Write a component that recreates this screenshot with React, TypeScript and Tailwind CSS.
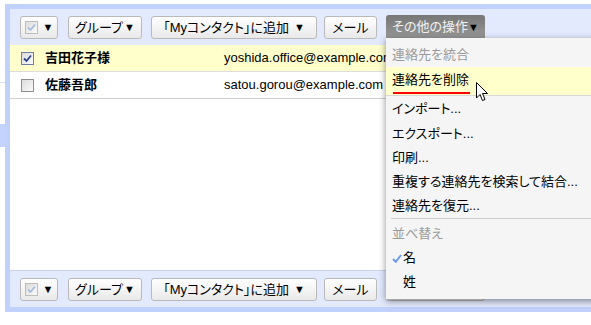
import React from "react"

const font = "font-['Liberation_Sans','Noto_Sans_CJK_JP',sans-serif]"

function Check({ color = "#2b3f8f" }: { color?: string }) {
  return (
    <svg width="9" height="9" viewBox="0 0 9 9" className="block">
      <path d="M1 4.5 L3.5 7 L8 1.5" fill="none" stroke={color} strokeWidth="1.8" />
    </svg>
  )
}

function Checkbox({ checked, disabled }: { checked?: boolean; disabled?: boolean }) {
  const border = disabled ? "border-[#bdbdbd]" : checked ? "border-[#6f7fa8]" : "border-[#8f8f8f]"
  return (
    <div
      className={`w-[13px] h-[13px] border ${border} bg-gradient-to-br from-[#dcdcdc] to-[#fbfbfb] flex items-center justify-center shrink-0`}
    >
      {checked && <Check color={disabled ? "#a9bde0" : "#2b3f8f"} />}
    </div>
  )
}

function Btn({ w, children, className = "" }: { w: string; children?: React.ReactNode; className?: string }) {
  return (
    <div
      className={`${w} h-[23px] shrink-0 border border-[#b9b9b9] rounded-[3px] bg-gradient-to-b from-[#ffffff] to-[#e9e9e9] flex items-center justify-center text-[13px] text-black ${className}`}
    >
      {children}
    </div>
  )
}

function Toolbar({ dark }: { dark?: boolean }) {
  return (
    <div className="flex items-start pl-[10px]">
      <Btn w="w-[38px]" className="gap-[5px]">
        <Checkbox checked disabled />
        <span className="text-[11px]">▼</span>
      </Btn>
      <Btn w="w-[74px]" className="ml-[10px]">
        グループ<span className="text-[11px] ml-[1px]">▼</span>
      </Btn>
      <Btn w="w-[166px]" className="ml-[9px]">
        「Myコンタクト」に追加<span className="text-[11px] ml-[5px]">▼</span>
      </Btn>
      <Btn w="w-[53px]" className="ml-[7px]">
        メール
      </Btn>
      {dark ? (
        <div className="ml-[9px] w-[99px] h-[24px] -mt-[1px] rounded-t-[3px] bg-gradient-to-b from-[#767676] to-[#999999] flex items-center justify-center text-[13px] text-[#f2f2f2]">
          その他の操作<span className="text-[11px] text-black">▼</span>
        </div>
      ) : (
        // hidden under the open menu
        <Btn w="w-[99px]" className="ml-[9px]" />
      )}
    </div>
  )
}

const rows = [
  { name: "吉田花子様", email: "yoshida.office@example.com", checked: true },
  { name: "佐藤吾郎", email: "satou.gorou@example.com", checked: false },
]

function MenuItem({ children, gray, h = "h-[24px]" }: { children: React.ReactNode; gray?: boolean; h?: string }) {
  return (
    <div className={`${h} flex items-center pl-[6px] whitespace-nowrap ${gray ? "text-[#9a9a9a]" : "text-black"}`}>
      {children}
    </div>
  )
}

export default function App() {
  return (
    <div className={`relative w-[591px] h-[325px] bg-white overflow-hidden ${font} [font-feature-settings:'palt']`}>
      <div className="absolute left-0 top-[124px] w-[5px] h-[23px] bg-[#c3d3fd]" />
      <div className="absolute left-0 top-[82px] w-[5px] h-[1px] bg-[#dde4f5]" />

      <div className="ml-[5px] mt-[4px] w-[700px] border-l-[5px] border-t-[5px] border-b-[5px] border-[#c0d1fc] flex flex-col">
        {/* top toolbar */}
        <div className="h-[36px] bg-[#e3eafe] pt-[7px]">
          <Toolbar dark />
        </div>

        {/* contact list */}
        <div className="h-[226px] bg-white border-b border-[#c9d3ec]">
          {rows.map((r) => (
            <div
              key={r.name}
              className={`h-[27px] flex items-center pl-[11px] border-b ${r.checked ? "bg-[#ffffcc] border-[#dddddd]" : "bg-white border-[#cfcfcf]"}`}
            >
              <Checkbox checked={r.checked} />
              <div className="ml-[11px] w-[179px] text-[13px] font-bold text-black">{r.name}</div>
              <div className="text-[13px] text-black">{r.email}</div>
            </div>
          ))}
        </div>

        {/* bottom toolbar */}
        <div className="h-[36px] bg-[#e3eafe] pt-[7px]">
          <Toolbar />
        </div>
      </div>

      {/* open menu */}
      <div className="absolute left-[386px] top-[38px] w-[230px] h-[261px] bg-[#f5f5f5] shadow-[0_2px_7px_rgba(0,0,0,0.45)] pt-[5px] text-[13px]">
        <MenuItem gray>連絡先を統合</MenuItem>
        <div className="h-[29px] bg-[#ffffcc] border-b border-[#d8d8d8] pl-[6px] flex flex-col">
          <div className="h-[25px] flex items-center whitespace-nowrap">連絡先を削除</div>
          <div className="ml-[1px] w-[77px] h-[2px] bg-[#ff0000]" />
        </div>
        <MenuItem h="h-[25px]">インポート...</MenuItem>
        <MenuItem h="h-[25px]">エクスポート...</MenuItem>
        <MenuItem>印刷...</MenuItem>
        <MenuItem>重複する連絡先を検索して結合...</MenuItem>
        <MenuItem>連絡先を復元...</MenuItem>
        <div className="ml-[5px] h-[1px] bg-[#cccccc]" />
        <div className="h-[3px]" />
        <MenuItem gray>並べ替え</MenuItem>
        <MenuItem>
          <svg width="10" height="9" viewBox="0 0 10 9" className="mr-[1px]">
            <path d="M1 5 L3.8 7.8 L9 1" fill="none" stroke="#6d9cf2" strokeWidth="2" />
          </svg>
          名
        </MenuItem>
        <MenuItem>
          <span className="ml-[11px]">姓</span>
        </MenuItem>
      </div>

      {/* mouse pointer */}
      <svg className="absolute left-[476px] top-[82px]" width="13" height="21" viewBox="0 0 13 21">
        <path d="M0.5 0.5 L0.5 16 L4 12.5 L6.5 18.5 L9 17.5 L6.5 11.5 L11.5 11.5 Z" fill="white" stroke="black" strokeWidth="1" />
      </svg>
    </div>
  )
}
